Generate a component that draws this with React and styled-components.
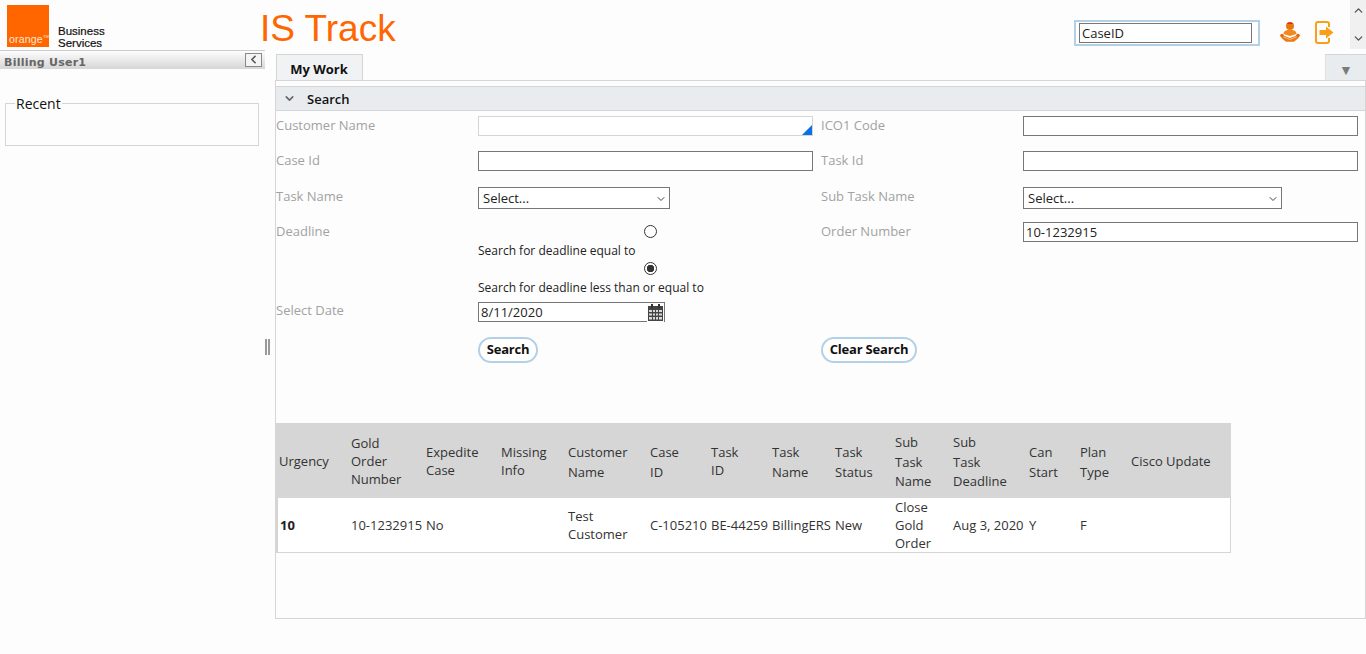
import React from 'react'
import styled, { createGlobalStyle } from 'styled-components'
import { ChevronDown, ChevronUp, ChevronLeft } from 'lucide-react'

const GlobalStyle = createGlobalStyle`
    html, body {
        margin: 0;
        padding: 0;
        background: #fdfdfd;
        overflow: hidden;
    }
    * { box-sizing: border-box; }
    body {
        font-family: "Open Sans", sans-serif;
        font-size: 13px;
        color: #222;
    }
`

const Page = styled.div`
    width: 1366px;
    height: 654px;
    display: flex;
    flex-direction: column;
    overflow: hidden;
`

const Header = styled.header`
    height: 50px;
    display: flex;
    align-items: flex-start;
`

const Logo = styled.div`
    width: 260px;
    height: 50px;
    display: flex;
    padding: 5px 0 0 7px;
    gap: 9px;
`

const LogoSquare = styled.div`
    width: 42px;
    height: 42px;
    background: #ff6600;
    color: #ffe6d6;
    display: flex;
    align-items: flex-end;
    font: 10.5px/13px "Liberation Sans", sans-serif;
    padding: 0 0 1px 2px;
    letter-spacing: 0.2px;
    sup {
        font-size: 4px;
        line-height: 10px;
        align-self: flex-start;
        margin-top: 27px;
    }
`

const LogoText = styled.div`
    margin-top: 20px;
    font: 11.5px/12px "Liberation Sans", sans-serif;
    color: #111;
    -webkit-text-stroke: 0.2px #111;
`

const Title = styled.h1`
    margin: 6px 0 0;
    font: 400 37px/46px "Liberation Sans", sans-serif;
    color: #ff6600;
    flex: 1;
`

const CaseBox = styled.div`
    width: 186px;
    height: 26px;
    margin-top: 20px;
    border: 2px solid #b3d1e6;
    padding: 1px 6px 0 3px;
    background: #fff;
`

const CaseInput = styled.input`
    width: 100%;
    height: 20px;
    border: 1px solid #777;
    padding: 0 2px;
    font: 13px "Open Sans", sans-serif;
    color: #222;
    background: #fff;
    display: block;
    outline: none;
`

const HeaderIcons = styled.div`
    display: flex;
    margin: 21px 0 0 20px;
    gap: 15px;
    width: 70px;
`

const WindowScroll = styled.div`
    width: 16px;
    height: 49px;
    background: #f0f0f0;
    color: #555;
    display: flex;
    flex-direction: column;
    justify-content: space-between;
    align-items: center;
    padding: 4px 0;
`

const Body = styled.div`
    flex: 1;
    display: flex;
`

const Sidebar = styled.aside`
    width: 265px;
`

const SideBar = styled.div`
    height: 19px;
    border-top: 1px solid #ccc;
    background: linear-gradient(#fdfdfd, #d6d6d6);
    display: flex;
    align-items: center;
    justify-content: space-between;
    padding: 4px 3px 0 4px;
    font: 700 11px "DejaVu Sans", sans-serif;
    letter-spacing: 0.25px;
    color: #666;
`

const CollapseButton = styled.div`
    width: 17px;
    height: 14px;
    margin-top: -5px;
    border: 1px solid #888;
    background: #f4f4f4;
    display: flex;
    align-items: center;
    justify-content: center;
    color: #555;
`

const Recent = styled.fieldset`
    margin: 25px 6px 0 5px;
    height: 52px;
    border: 1px solid #d5d5d5;
    padding: 0 9px;
    legend {
        font-size: 14px;
        line-height: 19px;
        padding: 0 1px;
        color: #111;
    }
`

const Splitter = styled.div`
    width: 10px;
    padding-top: 289px;
    span {
        display: block;
        width: 5px;
        height: 16px;
        border-left: 2px solid #999;
        border-right: 2px solid #999;
    }
`

const Main = styled.main`
    flex: 1;
    padding-top: 4px;
`

const TabStrip = styled.div`
    height: 26px;
    display: flex;
    justify-content: space-between;
    padding-left: 1px;
`

const Tab = styled.div`
    width: 87px;
    border: 1px solid #d5d5d5;
    border-bottom: 0;
    background: #f0f2f4;
    font-weight: 700;
    line-height: 29px;
    text-align: center;
    padding-right: 1px;
    color: #111;
`

const TabMenu = styled.div`
    width: 41px;
    background: #e9ecef;
    border-left: 1px solid #e0e0e0;
    border-top: 1px solid #d5d5d5;
    color: #7b7b7b;
    font-size: 14px;
    line-height: 30px;
    text-align: center;
`

const Panel = styled.section`
    height: 539px;
    border: 1px solid #d5d5d5;
    padding-top: 5px;
`

const SectionHead = styled.div`
    height: 25px;
    background: #e9ecef;
    border-top: 1px solid #d5d5d5;
    border-bottom: 1px solid #d5d5d5;
    display: flex;
    align-items: center;
    gap: 11px;
    padding-left: 7px;
    font-weight: 600;
    color: #111;
`

const Form = styled.div`
    padding-top: 5px;
`

const FormRow = styled.div`
    height: ${props => props.$height}px;
    display: grid;
    grid-template-columns: 202px 335px 210px 335px;
    align-items: start;
`

const Label = styled.label`
    display: block;
    color: #a2a2a2;
    line-height: 18px;
    margin-top: ${props => props.$top || 0}px;
    padding-left: ${props => (props.$right ? 8 : 0)}px;
`

const TextInput = styled.input`
    display: block;
    width: 335px;
    height: 20px;
    border: 1px solid ${props => (props.$soft ? '#d5d5d5' : '#777')};
    padding: 0 2px;
    font: 13px "Open Sans", sans-serif;
    color: #222;
    background: #fff;
    outline: none;
`

const Lookup = styled.div`
    position: relative;
    width: 335px;
    &::after {
        content: "";
        position: absolute;
        right: 1px;
        bottom: 1px;
        border-left: 10px solid transparent;
        border-bottom: 10px solid #0b6fe8;
    }
`

const SelectWrap = styled.div`
    position: relative;
    width: ${props => props.$width}px;
    height: 22px;
    svg {
        position: absolute;
        right: 3px;
        top: 6px;
        color: #444;
        pointer-events: none;
    }
`

const Select = styled.select`
    appearance: none;
    width: 100%;
    height: 22px;
    border: 1px solid #777;
    border-radius: 0;
    padding: 0 0 0 4px;
    font: 13px "Open Sans", sans-serif;
    color: #222;
    background: #fff;
    outline: none;
`

const RadioGroup = styled.div`
    width: 335px;
`

const RadioOption = styled.div`
    height: 34px;
    font-size: 12px;
    line-height: 18px;
    color: #222;
    white-space: nowrap;
`

const Radio = styled.input.attrs({ type: 'radio' })`
    appearance: none;
    display: block;
    width: 13px;
    height: 13px;
    margin: 3px 0 4px 166px;
    border: 1px solid #333;
    border-radius: 50%;
    background: #fff;
    &:checked {
        background: radial-gradient(circle, #333 0 3.5px, #fff 4px);
    }
`

const DateField = styled.div`
    width: 187px;
    height: 20px;
    display: flex;
    border-top: 1px solid #777;
    border-right: 1px solid #777;
`

const DateInput = styled.input`
    width: 169px;
    height: 19px;
    border: 1px solid #777;
    border-top: 0;
    border-right: 0;
    padding: 0 2px;
    font: 13px "Open Sans", sans-serif;
    color: #222;
    background: #fff;
    outline: none;
`

const CalendarCell = styled.div`
    flex: 1;
    padding: 1px 0 0 1px;
`

const PillButton = styled.button`
    height: 26px;
    width: ${props => props.$width}px;
    border: 2px solid #b3d1e6;
    border-radius: 13px;
    background: #fff;
    padding: 0 0 2px;
    font: 700 13px "Open Sans", sans-serif;
    letter-spacing: -0.2px;
    color: #111;
    margin-left: ${props => (props.$right ? 8 : 0)}px;
`

const Grid = styled.table`
    margin-top: 60px;
    width: 955px;
    border-collapse: separate;
    border-spacing: 0;
    table-layout: fixed;
    th {
        height: 75px;
        background: #d6d6d6;
        font-weight: 400;
        text-align: left;
        padding: 0 0 0 3px;
        vertical-align: middle;
        color: #333;
    }
    td {
        height: 55px;
        background: #fff;
        padding: 0 0 0 3px;
        line-height: 18px;
        vertical-align: middle;
        color: #333;
        white-space: nowrap;
        border-bottom: 1px solid #d5d5d5;
    }
    td:first-child {
        border-left: 2px solid #d5d5d5;
        padding-left: 2px;
    }
    td:last-child {
        border-right: 1px solid #d5d5d5;
    }
`

const HeadText = styled.div`
    line-height: ${props => (props.$tall ? 19.5 : 18)}px;
    padding-top: ${props => (props.$tall ? 4 : 0)}px;
`

const Urgency = styled.td`
    && { font-weight: 700; color: #222; }
`

function ReaderIcon() {
    return (
        <svg width="20" height="22" viewBox="0 0 20 22">
            <circle cx="10" cy="5" r="4" fill="#ee7410" />
            <path d="M6.700 3a4 4 0 0 1 6.600 0z" fill="#d8301a" />
            <path d="M3.500 13c0-3 3.200-4.200 6.500-4.200s6.500 1.200 6.500 4.200l-6.500 2z" fill="#f08a1e" />
            <path d="M1 13.500l9 3.500 9-3.500-.5 3.500-4.500 3.800H6L1.500 17z" fill="#ee7a10" />
            <path d="M3 15.500l7 3 7-3" fill="none" stroke="#fbc48c" strokeWidth="0.900" />
            <circle cx="2" cy="14.500" r="1.800" fill="#e8660a" />
            <circle cx="18" cy="14.500" r="1.800" fill="#e8660a" />
        </svg>
    )
}

function ExitIcon() {
    return (
        <svg width="19" height="23" viewBox="0 0 19 23">
            <path d="M14 6V3a2 2 0 0 0-2-2H3a2 2 0 0 0-2 2v17a2 2 0 0 0 2 2h9a2 2 0 0 0 2-2v-3" fill="none" stroke="#f9a01b" strokeWidth="2" />
            <path d="M4.500 9H11V5.500l7.500 6-7.500 6V14H4.500z" fill="#f9a01b" />
        </svg>
    )
}

function CalendarIcon() {
    return (
        <svg width="15" height="17" viewBox="0 0 15 17">
            <path d="M0 2h15v15H0z" fill="#444" />
            <path d="M3 0h2v4H3zM10 0h2v4h-2z" fill="#333" />
            <path d="M1 6h3v2H1zM5 6h2v2H5zM8 6h2v2H8zM11 6h3v2h-3zM1 9.500h3v2H1zM5 9.500h2v2H5zM8 9.500h2v2H8zM11 9.500h3v2h-3zM1 13h3v2.500H1zM5 13h2v2.500H5zM8 13h2v2.500H8zM11 13h3v2.500h-3z" fill="#d8d8d8" />
        </svg>
    )
}

const columns = [
    { width: 72, head: ['Urgency'] },
    { width: 75, head: ['Gold', 'Order', 'Number'] },
    { width: 75, head: ['Expedite', 'Case'] },
    { width: 67, head: ['Missing', 'Info'] },
    { width: 82, head: ['Customer', 'Name'], tall: true },
    { width: 61, head: ['Case', 'ID'], tall: true },
    { width: 61, head: ['Task', 'ID'] },
    { width: 63, head: ['Task', 'Name'], tall: true },
    { width: 60, head: ['Task', 'Status'], tall: true },
    { width: 58, head: ['Sub', 'Task', 'Name'], tall: true },
    { width: 76, head: ['Sub', 'Task', 'Deadline'], tall: true },
    { width: 51, head: ['Can', 'Start'], tall: true },
    { width: 51, head: ['Plan', 'Type'], tall: true },
    { width: 103, head: ['Cisco Update'] },
]

function App() {
    return (
        <Page>
            <GlobalStyle />
            <Header>
                <Logo>
                    <LogoSquare>orange<sup>TM</sup></LogoSquare>
                    <LogoText>Business<br />Services</LogoText>
                </Logo>
                <Title>IS Track</Title>
                <CaseBox><CaseInput defaultValue="CaseID" /></CaseBox>
                <HeaderIcons>
                    <ReaderIcon />
                    <ExitIcon />
                </HeaderIcons>
                <WindowScroll>
                    <ChevronUp size={13} strokeWidth={2.500} />
                    <ChevronDown size={13} strokeWidth={2.500} />
                </WindowScroll>
            </Header>
            <Body>
                <Sidebar>
                    <SideBar>
                        <span>Billing User1</span>
                        <CollapseButton><ChevronLeft size={13} strokeWidth={3} /></CollapseButton>
                    </SideBar>
                    <Recent><legend>Recent</legend></Recent>
                </Sidebar>
                <Splitter><span /></Splitter>
                <Main>
                    <TabStrip>
                        <Tab>My Work</Tab>
                        <TabMenu>▼</TabMenu>
                    </TabStrip>
                    <Panel>
                        <SectionHead>
                            <ChevronDown size={13} strokeWidth={3} color="#666" />
                            <span>Search</span>
                        </SectionHead>
                        <Form>
                            <FormRow $height={35}>
                                <Label>Customer Name</Label>
                                <Lookup><TextInput $soft /></Lookup>
                                <Label $right>ICO1 Code</Label>
                                <TextInput />
                            </FormRow>
                            <FormRow $height={36}>
                                <Label>Case Id</Label>
                                <TextInput />
                                <Label $right>Task Id</Label>
                                <TextInput />
                            </FormRow>
                            <FormRow $height={35}>
                                <Label>Task Name</Label>
                                <SelectWrap $width={192}>
                                    <Select><option>Select...</option></Select>
                                    <ChevronDown size={12} />
                                </SelectWrap>
                                <Label $right>Sub Task Name</Label>
                                <SelectWrap $width={259}>
                                    <Select><option>Select...</option></Select>
                                    <ChevronDown size={12} />
                                </SelectWrap>
                            </FormRow>
                            <FormRow $height={80}>
                                <Label>Deadline</Label>
                                <RadioGroup>
                                    <RadioOption>
                                        <Radio name="deadline" />
                                        Search for deadline equal to
                                    </RadioOption>
                                    <RadioOption>
                                        <Radio name="deadline" defaultChecked />
                                        Search for deadline less than or equal to
                                    </RadioOption>
                                </RadioGroup>
                                <Label $right>Order Number</Label>
                                <TextInput defaultValue="10-1232915" />
                            </FormRow>
                            <FormRow $height={35}>
                                <Label $top={-1}>Select Date</Label>
                                <DateField>
                                    <DateInput defaultValue="8/11/2020" />
                                    <CalendarCell><CalendarIcon /></CalendarCell>
                                </DateField>
                            </FormRow>
                            <FormRow $height={26}>
                                <span />
                                <div><PillButton $width={60}>Search</PillButton></div>
                                <div><PillButton $right $width={96}>Clear Search</PillButton></div>
                            </FormRow>
                        </Form>
                        <Grid>
                            <colgroup>
                                {columns.map((col, i) => <col key={i} style={{ width: col.width }} />)}
                            </colgroup>
                            <thead>
                                <tr>
                                    {columns.map((col, i) => (
                                        <th key={i}>
                                            <HeadText $tall={col.tall}>
                                                {col.head.map((word, j) => <div key={j}>{word}</div>)}
                                            </HeadText>
                                        </th>
                                    ))}
                                </tr>
                            </thead>
                            <tbody>
                                <tr>
                                    <Urgency>10</Urgency>
                                    <td>10-1232915</td>
                                    <td>No</td>
                                    <td></td>
                                    <td>Test<br />Customer</td>
                                    <td>C-105210</td>
                                    <td>BE-44259</td>
                                    <td>BillingERS</td>
                                    <td>New</td>
                                    <td>Close<br />Gold<br />Order</td>
                                    <td>Aug 3, 2020</td>
                                    <td>Y</td>
                                    <td>F</td>
                                    <td></td>
                                </tr>
                            </tbody>
                        </Grid>
                    </Panel>
                </Main>
            </Body>
        </Page>
    )
}

export default App
